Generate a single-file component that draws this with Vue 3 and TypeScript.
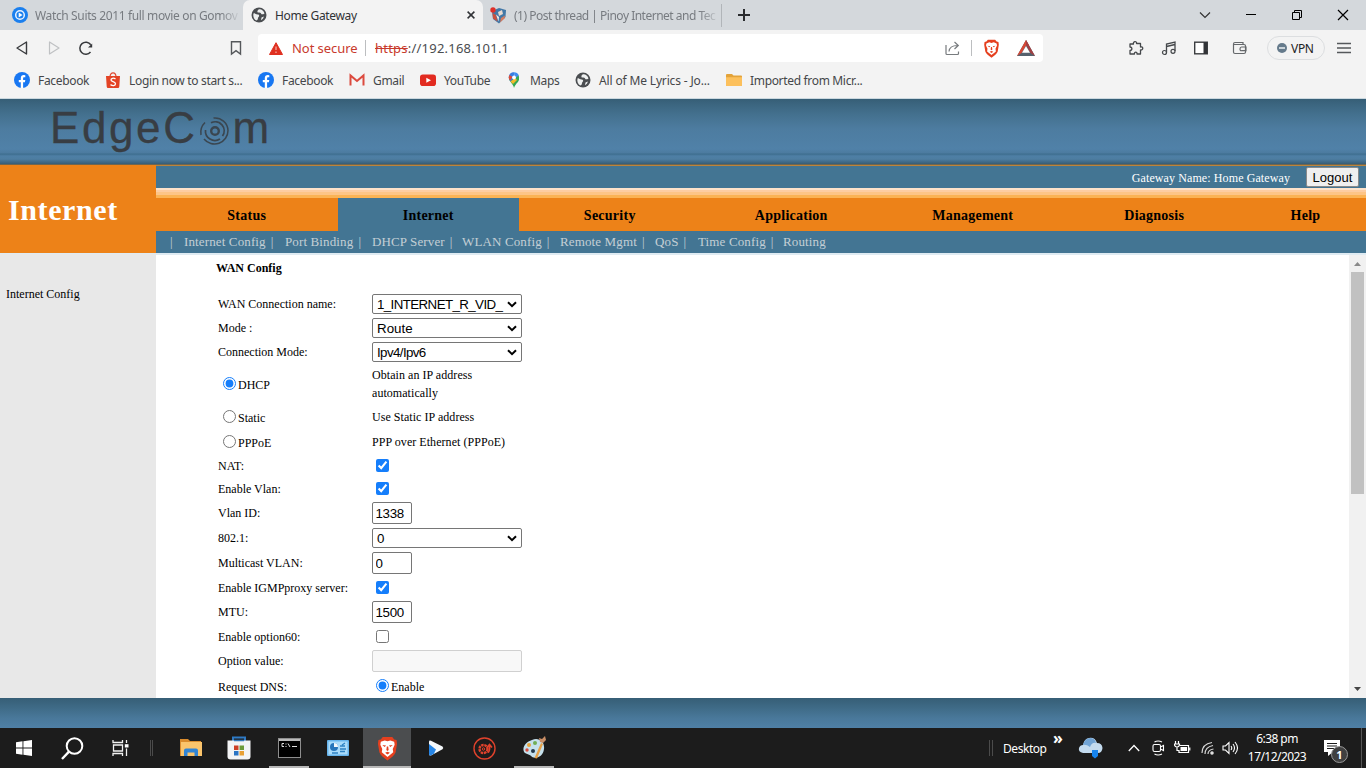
<script setup lang="ts">
import { ref } from 'vue'

interface Row {
  label: string
  h: number
  kind: 'select' | 'radio' | 'check' | 'input' | 'wide' | 'enable'
  value?: string
  on?: boolean
}

const bookmarks = [
  { icon: 'fb', text: 'Facebook', w: 91, tight: true },
  { icon: 'shop', text: 'Login now to start s...', w: 153, tight: true },
  { icon: 'fb', text: 'Facebook', w: 91, tight: true },
  { icon: 'gmail', text: 'Gmail', w: 71, tight: true },
  { icon: 'yt', text: 'YouTube', w: 86, tight: true },
  { icon: 'maps', text: 'Maps', w: 69, tight: true },
  { icon: 'globe', text: 'All of Me Lyrics - Jo...', w: 151, tight: false },
  { icon: 'folder', text: 'Imported from Micr...', w: 150, tight: true },
]

const menu = ['Status', 'Internet', 'Security', 'Application', 'Management', 'Diagnosis', 'Help']
const active = ref('Internet')

const submenu = [
  { text: 'Internet Config', w: 101 },
  { text: 'Port Binding', w: 87 },
  { text: 'DHCP Server', w: 90 },
  { text: 'WLAN Config', w: 98 },
  { text: 'Remote Mgmt', w: 95 },
  { text: 'QoS', w: 43 },
  { text: 'Time Config', w: 85 },
  { text: 'Routing', w: 60 },
]

const rows: Row[] = [
  { label: 'WAN Connection name:', h: 24, kind: 'select', value: '1_INTERNET_R_VID_' },
  { label: 'Mode :', h: 24, kind: 'select', value: 'Route' },
  { label: 'Connection Mode:', h: 24, kind: 'select', value: 'Ipv4/Ipv6' },
  { label: 'DHCP', h: 40, kind: 'radio', value: 'Obtain an IP address automatically', on: true },
  { label: 'Static', h: 26, kind: 'radio', value: 'Use Static IP address' },
  { label: 'PPPoE', h: 24, kind: 'radio', value: 'PPP over Ethernet (PPPoE)' },
  { label: 'NAT:', h: 23, kind: 'check', on: true },
  { label: 'Enable Vlan:', h: 23, kind: 'check', on: true },
  { label: 'Vlan ID:', h: 26, kind: 'input', value: '1338' },
  { label: '802.1:', h: 24, kind: 'select', value: '0' },
  { label: 'Multicast VLAN:', h: 26, kind: 'input', value: '0' },
  { label: 'Enable IGMPproxy server:', h: 23, kind: 'check', on: true },
  { label: 'MTU:', h: 26, kind: 'input', value: '1500' },
  { label: 'Enable option60:', h: 23, kind: 'check', on: false },
  { label: 'Option value:', h: 26, kind: 'wide' },
  { label: 'Request DNS:', h: 25, kind: 'enable', value: 'Enable' },
]
</script>

<template>
  <div class="screen">
    <svg class="defs" width="0" height="0">
      <symbol id="globe" viewBox="0 0 16 16">
        <circle cx="8" cy="8" r="7.500" fill="#4a4d50" />
        <path d="M2.500 6.500C4 5.500 4.500 7.500 6.500 7.500S8.500 9 7.500 10 7.500 12.500 5.500 13.500C3 12.500 1.800 9.500 2.500 6.500Z M7.500 2.500C10 1.800 12.800 3.500 13.500 6.500 12 7.500 10.500 7.800 10 6.500S7 6.500 6.500 5 7 3.500 7.500 2.500Z M10.500 10.500 12.800 9.500C12.500 11.300 11.500 12.500 10 13.200Z" fill="#eef0f0" />
      </symbol>
      <symbol id="fb" viewBox="0 0 16 16">
        <circle cx="8" cy="8" r="8" fill="#1877f2" />
        <path d="M6.800 16V10.300H4.800V8H6.800V6.300C6.800 4.200 8 3.100 9.800 3.100L11.300 3.250V5.200H10.300C9.300 5.200 9.100 5.800 9.100 6.400V8H11.300L10.900 10.300H9.100V16Z" fill="#fff" />
      </symbol>
      <symbol id="shop" viewBox="0 0 16 16">
        <path d="M5 5C5-.5 11-.5 11 5" fill="none" stroke="#df4930" stroke-width="1.200" />
        <path d="M1 4H15L14.300 14.500Q14.200 16 13 16H3Q1.800 16 1.700 14.500Z" fill="#e34325" />
        <path d="M10.500 7C8.500 5.500 6 6.200 6 8S10.600 9.500 10.500 11.800 7.500 14 5.500 12.600" fill="none" stroke="#fff" stroke-width="1.300" />
      </symbol>
      <symbol id="gmail" viewBox="0 0 16 16">
        <path d="M3 13.500V7L8 11 13 7V13.500Z" fill="#f6f4f4" />
        <path d="M1.500 13.500V3.500L8 9 14.500 3.500V13.500" fill="none" stroke="#dc4a3e" stroke-width="2" />
      </symbol>
      <symbol id="yt" viewBox="0 0 16 16">
        <rect y="2.500" width="16" height="11.500" rx="2.800" fill="#e22b20" />
        <path d="M6.300 5.700 11 8.250 6.300 10.800Z" fill="#fff" />
      </symbol>
      <symbol id="maps" viewBox="0 0 16 16">
        <path d="M8 16C7.500 12 2.800 9.500 2.800 5.500L8 6.500 12.500 3Q14.500 8 10.500 11.500 8.500 14 8 16Z" fill="#34a853" />
        <path d="M2.800 5.500C2.800 2 5 .2 8 .2L8 6 4.500 9.500Q3 7.500 2.800 5.500Z" fill="#3a7de0" />
        <path d="M3.500 3 6.500 5 4 8.500Q1.800 6 3.500 3Z" fill="#e04a36" />
        <path d="M4.500 9.500 9 6 11 8 7 12Z" fill="#f4b92b" />
        <path d="M8 .2Q11.500.3 12.800 3.300L8.500 7Z" fill="#3f8df0" />
        <circle cx="8" cy="5.500" r="1.900" fill="#fff" />
      </symbol>
      <symbol id="folder" viewBox="0 0 16 16">
        <path d="M0 3Q0 2 1 2H6L7.500 3.600H15Q16 3.600 16 4.600V13Q16 14 15 14H1Q0 14 0 13Z" fill="#e3a33a" />
        <path d="M0 5.200H16V13Q16 14 15 14H1Q0 14 0 13Z" fill="#fcc05c" />
      </symbol>
      <symbol id="brave" viewBox="0 0 22 26">
        <path d="M6 1H16L18 3.500 20.500 4 21 8 19.500 17Q18 21 11 25.500 4 21 2.500 17L1 8 1.500 4 4 3.500Z" fill="#e5401f" />
        <path d="M4 6 8 4.500 11 5.500 14 4.500 18 6 18.500 9 16.500 13.500 17 17 11 22 5 17 5.500 13.500 3.500 9Z" fill="#fff" />
        <path d="M5.500 9.300 9.500 9.800 8 11.300ZM16.500 9.300 12.500 9.800 14 11.300ZM10.300 11H11.700L12.200 14.500 11 15.500 9.800 14.500ZM8.500 17.500 11 16.500 13.500 17.500 11 19.300Z" fill="#e5401f" />
      </symbol>
    </svg>

    <div class="tabs">
      <div class="tab first">
        <svg width="16" height="16" viewBox="0 0 16 16"><circle cx="8" cy="8" r="8" fill="#1a7fee" /><circle cx="8" cy="8" r="4.300" fill="none" stroke="#e8f2ff" stroke-width="1.500" /><path d="M6.700 5.500 10.500 8 6.700 10.500Z" fill="#fff" /></svg>
        <span class="title t1">Watch Suits 2011 full movie on Gomov</span>
      </div>
      <div class="tab current">
        <svg width="16" height="16"><use href="#globe" /></svg>
        <span class="title">Home Gateway</span>
        <svg width="8" height="8" viewBox="0 0 8 8"><path d="M.6.6 7.400 7.400M7.400.6.6 7.400" stroke="#303236" stroke-width="1.500" /></svg>
      </div>
      <div class="tab third">
        <svg width="17" height="17" viewBox="0 0 17 17"><path d="M2 4 9 1 16 3 15.500 10 9 16.500 3 12Z" fill="#4278a7" /><path d="M8 5 12 3 13 7 9 9Z" fill="#e9d9cf" /><path d="M2.500 6 6 8 7.500 14.500 3 11.500Z" fill="#c9503f" /><path d="M6 7.500 9 10 8.500 14.500Z" fill="#f2ece6" /><path d="M11 11 15 8.500 14.500 11.500 10 15.500Z" fill="#d77a5c" /><circle cx="3" cy="3" r="2.700" fill="#df3029" /></svg>
        <span class="title t3">(1) Post thread | Pinoy Internet and Tec</span>
      </div>
      <svg class="plus" width="12" height="12" viewBox="0 0 12 12"><path d="M6 0V12M0 6H12" stroke="#292b2e" stroke-width="2" /></svg>
      <div class="wincontrols">
        <svg width="12" height="12" viewBox="0 0 12 12"><path d="M1 3.500 6 8.500 11 3.500" fill="none" stroke="#333" stroke-width="1.200" /></svg>
        <svg width="12" height="12" viewBox="0 0 12 12"><path d="M1 5.500H11" stroke="#000" /></svg>
        <svg width="12" height="12" viewBox="0 0 12 12"><path d="M1.500 3.500H8.500V10.500H1.500ZM3.500 3V1.500H10.500V8.500H9" fill="none" stroke="#000" /></svg>
        <svg width="12" height="12" viewBox="0 0 12 12"><path d="M1 1 11 11M11 1 1 11" stroke="#000" stroke-width="1.200" /></svg>
      </div>
    </div>

    <div class="toolbar">
      <div class="navbtns">
        <svg width="14" height="16" viewBox="0 0 14 16"><path d="M11.500 2V14L2 8Z" fill="none" stroke="#393b3e" stroke-width="1.400" stroke-linejoin="round" /></svg>
        <svg width="14" height="16" viewBox="0 0 14 16"><path d="M2.500 2V14L12 8Z" fill="none" stroke="#bfc1c3" stroke-width="1.200" stroke-linejoin="round" /></svg>
        <svg width="16" height="16" viewBox="0 0 16 16"><path d="M12.500 12A6 6 0 1 1 12.800 4.800" fill="none" stroke="#36383b" stroke-width="1.500" /><path d="M14.200 3.500V7.500H10Z" fill="#36383b" /></svg>
      </div>
      <svg class="bm" width="12" height="16" viewBox="0 0 12 16"><path d="M1.500 1.700H10.500V14L6 10.700 1.500 14Z" fill="none" stroke="#55585b" stroke-width="1.400" /></svg>
      <div class="url">
        <svg width="14" height="13" viewBox="0 0 14 13"><path d="M7 .7 13.500 12.500H.5Z" fill="#df3020" stroke="#df3020" stroke-linejoin="round" /><path d="M7 4.500V8M7 9.500V11" stroke="#f4a79d" stroke-width="1.300" /></svg>
        <span class="notsecure">Not secure</span>
        <i class="vline"></i>
        <span class="addr"><s>https</s>://192.168.101.1</span>
        <svg class="share" width="15" height="15" viewBox="0 0 15 15"><path d="M1 4V12.500Q1 13.500 2 13.500H12.500Q13.500 13.500 13.500 12.500V10.500M4 10.500Q4.500 4.500 12.500 4.500M9.500 1 13.300 4.500 9.500 8" fill="none" stroke="#777b7e" stroke-width="1.200" /></svg>
        <i class="vline"></i>
        <svg class="lion" width="17" height="19"><use href="#brave" /></svg>
        <svg width="18" height="16" viewBox="0 0 18 16"><path d="M9 0 18 16H0Z" fill="#55616d" /><path d="M9 0 12 5.300 9 5.500 4.500 13 0 16Z" fill="#d84835" /><path d="M9 0 18 16 13.500 13 9 5Z" fill="#a33f42" /><path d="M9 6 13 12.700H5Z" fill="#fff" /></svg>
      </div>
      <div class="actions">
        <svg width="16" height="16" viewBox="0 0 16 16"><path d="M2 4H5.500C4.500 1 9.500 1 8.500 3.500H12.500V7C15.500 6 15.500 10.500 12.500 10V14H9C9.500 11.500 6 11.500 6.500 14H2V10.500C4.500 10.500 4.500 7 2 7Z" fill="none" stroke="#45484b" stroke-width="1.300" stroke-linejoin="round" /></svg>
        <svg width="16" height="16" viewBox="0 0 16 16"><path d="M5.500 12.500V4L14 2V11M5.500 6.500 14 4.500" fill="none" stroke="#45484b" stroke-width="1.300" /><circle cx="3.500" cy="12.500" r="2" fill="none" stroke="#45484b" stroke-width="1.200" /><circle cx="12" cy="11.300" r="2" fill="none" stroke="#45484b" stroke-width="1.200" /></svg>
        <svg width="14" height="14" viewBox="0 0 14 14"><rect x=".7" y="1.200" width="12.600" height="11.600" fill="#fff" stroke="#3b3d40" stroke-width="1.400" /><path d="M9.500 1H13V13H9.500Z" fill="#323438" /></svg>
        <svg width="15" height="14" viewBox="0 0 15 14"><path d="M1.500 3.500H12Q13.500 3.500 13.500 5V11Q13.500 12.500 12 12.500H3Q1.500 12.500 1.500 11V3Q1.500 1.500 3 1.500H11V3.500M14 6H9.500Q8 6 8 8T9.500 9.700H14Z" fill="none" stroke="#65686b" stroke-width="1.200" /></svg>
        <span class="vpn"><svg width="10" height="10" viewBox="0 0 10 10"><circle cx="5" cy="5" r="5" fill="#657a8b" /><path d="M2 5H8" stroke="#e4e9ec" stroke-width="1.600" /></svg>VPN</span>
        <svg class="burger" width="14" height="12" viewBox="0 0 14 12"><path d="M0 1.500H14M0 6H14M0 10.500H14" stroke="#55585b" stroke-width="1.300" /></svg>
      </div>
    </div>

    <div class="bookmarks">
      <div v-for="(b, i) in bookmarks" :key="i" class="bookmark" :class="{ tight: b.tight }" :style="{ width: b.w + 'px' }">
        <svg width="16" height="16"><use :href="'#' + b.icon" /></svg>
        <span>{{ b.text }}</span>
      </div>
    </div>

    <header class="brand">
      <span>EdgeC</span>
      <svg width="34" height="32" viewBox="0 0 34 32" fill="none" stroke="#3a4650">
        <circle cx="17" cy="16" r="3.800" stroke-width="2.400" />
        <path d="M13 7.800A9 9 0 0 1 24.500 21M22 24A9.500 9.500 0 0 1 7.500 15" stroke-width="1.700" />
        <path d="M15.500 3A13 13 0 0 1 30 15.500 13.500 13.500 0 0 1 6 24M3 20A14 14 0 0 1 7 7.500" stroke-width="1.500" />
      </svg>
      <span>m</span>
    </header>

    <div class="top">
      <div class="section">Internet</div>
      <div class="right">
        <div class="gateway">
          <span>Gateway Name: Home Gateway</span>
          <button>Logout</button>
        </div>
        <div class="stripe"></div>
        <nav class="menu">
          <a v-for="m in menu" :key="m" :class="{ on: m === active }" @click="active = m">{{ m }}</a>
        </nav>
        <div class="submenu">
          <i>|</i>
          <div v-for="(s, i) in submenu" :key="s.text" :style="{ width: s.w + 'px' }">
            <span>{{ s.text }}</span><i v-if="i < submenu.length - 1">|</i>
          </div>
        </div>
      </div>
    </div>

    <main>
      <aside>Internet Config</aside>
      <section>
        <h1>WAN Config</h1>
        <div v-for="r in rows" :key="r.label" class="row" :class="r.kind" :style="{ height: r.h + 'px' }">
          <div class="label">
            <input v-if="r.kind === 'radio'" type="radio" name="wan" :checked="r.on">
            <span>{{ r.label }}</span>
          </div>
          <div class="field">
            <div v-if="r.kind === 'select'" class="dropdown" :class="{ long: r.value!.length > 8 }">
              <span>{{ r.value }}</span>
              <svg width="10" height="7" viewBox="0 0 10 7"><path d="M1 1.200 5 5.200 9 1.200" fill="none" stroke="#000" stroke-width="2" /></svg>
            </div>
            <span v-else-if="r.kind === 'radio'" class="desc">{{ r.value }}</span>
            <input v-else-if="r.kind === 'check'" type="checkbox" :checked="r.on">
            <input v-else-if="r.kind === 'input'" type="text" :value="r.value">
            <input v-else-if="r.kind === 'wide'" class="wide" type="text" disabled>
            <template v-else>
              <input type="radio" name="dns" checked><span>{{ r.value }}</span>
            </template>
          </div>
        </div>
      </section>
      <div class="scroll">
        <svg width="7" height="4" viewBox="0 0 7 4"><path d="M0 4 3.500 0 7 4Z" fill="#8a8a8a" /></svg>
        <div class="thumb"></div>
        <svg class="down" width="7" height="4" viewBox="0 0 7 4"><path d="M0 0 3.500 4 7 0Z" fill="#454545" /></svg>
      </div>
    </main>
    <footer></footer>

    <div class="taskbar">
      <div class="task"><svg width="16" height="16" viewBox="0 0 16 16"><path d="M0 2.200 6.500 1.300V7.600H0ZM7.400 1.200 16 0V7.600H7.400ZM0 8.400H6.500V14.700L0 13.800ZM7.400 8.400H16V16L7.400 14.800Z" fill="#fff" /></svg></div>
      <div class="task"><svg width="23" height="23" viewBox="0 0 23 23"><circle cx="13.500" cy="9" r="7.800" fill="none" stroke="#fff" stroke-width="2" /><path d="M8 14.700 1 22" stroke="#fff" stroke-width="2.400" /></svg></div>
      <div class="task"><svg width="17" height="16" viewBox="0 0 17 16"><path d="M1 0V2.500H10.500V0M1 16V13.500H10.500V16M1.500 5H10.500V11H1.500ZM14.500 0V3M14.500 8.500V16" fill="none" stroke="#f2f2f2" stroke-width="1.300" /><path d="M12.800 4.200H16.500V7.500H12.800Z" fill="#fff" /></svg></div>
      <div class="grip"></div>
      <div class="task exp"><svg width="22" height="18" viewBox="0 0 22 18"><path d="M0 0H8L10 2H21V17H0Z" fill="#da8c2d" /><path d="M1 3H22V17H1Z" fill="#fac46c" /><path d="M4 17V11.500Q4 9.500 6 9.500H16Q18 9.500 18 11.500V17H14.500V13.500H7.500V17Z" fill="#3184d4" /></svg></div>
      <div class="task"><svg width="24" height="24" viewBox="0 0 24 24"><path d="M6 6V1.500H18V6" fill="none" stroke="#2e7ac5" stroke-width="2" /><path d="M.5 4.500H23.500V20.500Q23.500 23.500 20.500 23.500H3.500Q.5 23.500.5 20.500Z" fill="#f3f4f5" /><path d="M7 4.500H17" stroke="#3479b8" stroke-width="1.500" /><path d="M7 9.500H11.500V14H7Z" fill="#cc3f24" /><path d="M12.500 9.500H17V14H12.500Z" fill="#6c9b39" /><path d="M7 15H11.500V19.500H7Z" fill="#2b75c4" /><path d="M12.500 15H17V19.500H12.500Z" fill="#e8a034" /></svg></div>
      <div class="task open"><svg width="23" height="20" viewBox="0 0 23 20"><rect x=".5" y=".5" width="22" height="19" fill="#000" stroke="#8e8e8e" /><path d="M1 1H22V3H1Z" fill="#bbb" /><path d="M6 5.500H4V8.500H6M8 5.500V6.500M8 8V9M10 5.500 12 9M14 8.500H19" fill="none" stroke="#ddd" /></svg></div>
      <div class="task"><svg width="22" height="16" viewBox="0 0 22 16"><rect width="22" height="16" rx="1" fill="#66b4ec" /><rect x="1.500" y="1.500" width="19" height="13" fill="#a9dbfb" /><circle cx="7" cy="7" r="4" fill="#2775bb" /><path d="M7 7V3A4 4 0 0 1 11 7Z" fill="#f3f7fa" /><path d="M13 6H18M13 9H19M13 11.500H18M5 13H11M15 5 18 3" stroke="#2e83c4" stroke-width="1.300" /></svg></div>
      <div class="task lit open"><svg width="21" height="25"><use href="#brave" /></svg></div>
      <div class="task"><svg width="16" height="16" viewBox="0 0 16 16"><path d="M1 2Q1 0 3 .800L14.500 6.500Q16 8 14.500 9.200L3 15.500Q1 16 1 14Z" fill="#f4f8fb" /><path d="M1 4 8 9.500 6 13.500 3 15.500Q1 16 1 14Z" fill="#2685e6" /></svg></div>
      <div class="task"><svg width="23" height="23" viewBox="0 0 23 23" fill="none" stroke="#df422c"><circle cx="11.500" cy="11.500" r="10.500" stroke-width="1.400" /><circle cx="10.500" cy="12" r="4" stroke-width="2.400" stroke-dasharray="2.500 .7" /><circle cx="10.500" cy="12" r="1.200" /><path d="M14.500 15.500Q17 15 16.500 9M14 10.500 16.500 7.500 19 10.500" stroke-width="1.700" /></svg></div>
      <div class="task open paint"><svg width="25" height="24" viewBox="0 0 25 24"><path d="M10 4C17 1 23 6 22 13 21 21 14 23 10 21 8 18 6 19 3 17-1 13 3 6 10 4Z" fill="#c6e0ec" /><circle cx="7" cy="9" r="2" fill="#e6a33d" /><circle cx="13" cy="7" r="2" fill="#71ae54" /><circle cx="5" cy="14" r="1.700" fill="#d64b3e" /><circle cx="11" cy="15" r="2" fill="#23384b" /><path d="M12.500 22 19 7 21 8 15 22.500Z" fill="#e6a148" /><path d="M18 6 17 2 20 3 23 0 24 4 21 7Z" fill="#c98e66" /></svg></div>

      <div class="tray">
        <div class="grip2"></div>
        <span class="desktop">Desktop</span>
        <span class="more">»</span>
        <svg class="weather" width="25" height="22" viewBox="0 0 25 22"><path d="M5 16Q0 15 1 11 2 8 5 8 6 2 11 1 17 0 19 6 24 6 24.500 11 24 16 20 16Z" fill="#c3dbef" /><path d="M5 8Q7 1 12 1 17 1 18 6 14 5 12 10 8 7 5 8Z" fill="#71a4d5" /><path d="M14 13H20V19L17 21.500 14 19Z" fill="#1684ee" /></svg>
        <svg class="chev" width="12" height="8" viewBox="0 0 12 8"><path d="M.8 7 6 1.500 11.200 7" fill="none" stroke="#fff" stroke-width="1.300" /></svg>
        <svg class="cam" width="13" height="16" viewBox="0 0 13 16" fill="none" stroke="#fff" stroke-width="1.100"><path d="M2.500 2Q6 0 10 2M2.500 14Q6 16 10 14" /><rect x="1" y="4.500" width="7.500" height="7" rx="1.500" /><path d="M8.500 7 11.500 5.500V10.500L8.500 9" /></svg>
        <svg class="bat" width="17" height="14" viewBox="0 0 17 14" fill="none" stroke="#fff" stroke-width="1.200"><path d="M6 4.500H14.500V11.500H5V9M15.800 6.500V9.500M1.500 0V2.500M4.500 0V2.500M.5 3H5.500V4Q5 6 3 6T.5 4ZM3 6V9.500H5" /><path d="M6.500 6H13V10H6.500Z" fill="#fff" stroke="none" /></svg>
        <svg class="wifi" width="14" height="14" viewBox="0 0 14 14" fill="none" stroke="#d6d6d6" stroke-width="1.200"><path d="M1 12Q1 3 11 1.500M4 13Q4 6 12 4.500M7 13Q7 9 12.500 8" /><circle cx="11" cy="12" r="1.200" fill="#fff" /></svg>
        <svg class="vol" width="17" height="14" viewBox="0 0 17 14" fill="none" stroke="#fff" stroke-width="1.100"><path d="M1 5H3.500L7 1.500V12.500L3.500 9H1ZM9 5Q10.500 7 9 9M11 3Q14 7 11 11M13 1Q18 7 13 13" /></svg>
        <div class="clock"><span>6:38 pm</span><span>17/12/2023</span></div>
        <div class="notice">
          <svg width="17" height="16" viewBox="0 0 17 16"><path d="M0 0H16V12H9L4 16V12H0Z" fill="#fff" /><path d="M3 3.500H13M3 6H13M3 8.500H10" stroke="#1c1c1c" stroke-width="1.200" /></svg>
          <b>1</b>
        </div>
        <div class="peek"></div>
      </div>
    </div>
  </div>
</template>

<style>
body {
  margin: 0;
  overflow: hidden;
}
</style>

<style scoped>
.screen {
  width: 1366px;
  height: 768px;
  overflow: hidden;
  display: flex;
  flex-direction: column;
  background: #fff;
  font-family: 'Liberation Serif', serif;
  font-size: 12px;
  color: #000;
}
.screen > * { flex-shrink: 0; }
.defs { position: absolute; }
svg { display: block; flex-shrink: 0; }
i { font-style: normal; }

.tabs, .toolbar, .bookmarks {
  display: flex;
  align-items: center;
  font-family: 'Noto Sans', sans-serif;
  background: #f3f3f3;
  white-space: nowrap;
}
.tabs { height: 30px; background: #d4d8dc; }
.tab {
  height: 30px;
  box-sizing: border-box;
  display: flex;
  align-items: center;
  color: #777b80;
}
.tab.first { width: 243px; padding-left: 12px; }
.first .title { margin-left: 7px; width: 206px; }
.current { width: 240px; padding-left: 8px; background: #f3f3f3; border-radius: 7px 7px 0 0; color: #303236; }
.current .title { margin-left: 8px; width: 192px; letter-spacing: -.35px; }
.third { width: 239px; height: 23px; padding-left: 7px; border-right: 1px solid #b1b5b9; }
.third .title { margin-left: 7px; width: 206px; }
.title { overflow: hidden; font-size: 12px; }
.t1, .t3 { mask-image: linear-gradient(90deg, #000 90%, transparent); }
.t1 { letter-spacing: -.36px; }
.t3 { letter-spacing: -.5px; }
.plus { margin-left: 16px; }
.wincontrols { margin-left: auto; margin-right: 17px; display: flex; gap: 34px; }

.toolbar { height: 36px; }
.navbtns { width: 230px; display: flex; padding-left: 15px; box-sizing: border-box; gap: 18px; }
.navbtns svg:last-child { margin-left: -1px; }
.url {
  width: 785px;
  height: 28px;
  margin-left: 16px;
  padding-left: 11px;
  box-sizing: border-box;
  display: flex;
  align-items: center;
  background: #fff;
  border-radius: 4px;
  font-size: 13px;
}
.notsecure { width: 73px; margin-left: 9px; color: #c83a2d; letter-spacing: -.05px; }
.vline { width: 1px; height: 16px; background: #bcbec0; }
.addr { width: 570px; margin-left: 9px; color: #4b4d50; letter-spacing: .22px; }
.addr s { color: #c83a2d; }
.share + .vline { margin-left: 11px; }
.lion { margin: 0 17px 0 11px; }
.actions { display: flex; align-items: center; margin-left: 85px; }
.actions > svg { margin-right: 17px; }
.actions > svg:nth-child(3) { margin-right: 24px; }
.actions > svg:nth-child(4) { margin-right: 20px; }
.vpn {
  width: 58px;
  height: 24px;
  box-sizing: border-box;
  border: 1px solid #dcdee0;
  border-radius: 12px;
  display: flex;
  align-items: center;
  padding-left: 9px;
  gap: 4px;
  color: #222;
  letter-spacing: -.3px;
}
.actions > .burger { margin: 0 0 0 12px; }

.bookmarks { height: 33px; padding: 0 0 4px 14px; box-sizing: border-box; border-bottom: 1px solid #cbd8df; color: #45474a; }
.bookmark { display: flex; align-items: center; gap: 8px; letter-spacing: -.15px; }
.bookmark.tight { letter-spacing: -.33px; }

.brand {
  height: 66px;
  box-sizing: border-box;
  padding: 4px 0 0 50px;
  display: flex;
  align-items: flex-start;
  border-bottom: 1px solid #6e6651;
  background: linear-gradient(#365e76 0, #3b657f 5px, #44718f 16px, #4d7ca0 30px, #5081a8 50px, #4c7b9f 54px, #3d6d8e 55px, #4e7fa5 57px, #4d7da1 60px, #375d76 65px);
  color: #383d43;
  font: 44px/50px 'Liberation Sans', sans-serif;
  letter-spacing: 2.600px;
  -webkit-text-stroke: .3px #383d43;
}
.brand svg { margin: 12px 1px 0 0; }

.top { height: 88px; display: flex; border-top: 1px solid #bd843a; box-sizing: border-box; }
.section {
  width: 156px;
  flex-shrink: 0;
  margin-top: -1px;
  padding: 28px 0 0 8px;
  box-sizing: border-box;
  background: #ed8218;
  color: #fff;
  font-size: 30px;
  line-height: 34px;
  font-weight: bold;
  letter-spacing: .6px;
}
.right { width: 1210px; background: #437593; }
.gateway { height: 22px; display: flex; justify-content: flex-end; align-items: center; padding-right: 7px; color: #fff; font-size: 12px; letter-spacing: .1px; }
.gateway span { margin-top: 2px; }
.gateway button {
  width: 53px;
  height: 20px;
  margin-left: 16px;
  padding: 0;
  background: #efefef;
  border: 1px solid #8a8a8a;
  border-radius: 2px;
  color: #000;
  font: 13px 'Liberation Sans', sans-serif;
}
.stripe { height: 10px; background: linear-gradient(#fde2ca 0 2px, #fdcda2 2px 4px, #fdc587 4px 7px, #fbb354 7px); }
.menu { height: 33px; display: flex; }
.menu a {
  width: 181.500px;
  height: 33px;
  line-height: 35px;
  text-align: center;
  background: #ed8218;
  font-size: 14px;
  font-weight: bold;
  letter-spacing: .25px;
}
.menu a:last-child { flex: 1; }
.menu a.on { background: #437593; }
.submenu { display: flex; height: 22px; line-height: 22px; padding-left: 14px; color: #c3cfd5; font-size: 13px; letter-spacing: .13px; white-space: nowrap; }
.submenu > i { width: 14px; }
.submenu div { display: flex; gap: 5px; }

main { height: 445px; display: flex; border-top: 2px solid #dfebf2; box-sizing: border-box; }
aside { width: 156px; box-sizing: border-box; margin-top: -1px; padding: 33px 0 0 6px; background: #e8e8e8; }
section { width: 1193px; height: 443px; overflow: hidden; padding-left: 60px; box-sizing: border-box; }
h1 { margin: 0; height: 37px; line-height: 26px; font-size: 12px; }
.row { display: flex; align-items: center; padding-left: 2px; }
.label { width: 154px; display: flex; align-items: center; white-space: nowrap; }
.check .label, .enable .label, .radio .label { padding-top: 1px; }
.field { width: 150px; display: flex; align-items: center; }
.enable .field span { margin-top: 2px; }
.desc { width: 137px; line-height: 18px; letter-spacing: .05px; }
input { margin: 0; box-sizing: border-box; flex-shrink: 0; accent-color: #157efb; }
input[type='radio'], input[type='checkbox'] { width: 13px; height: 13px; }
.label input { margin: -3px 2px 0 5px; }
.radio .label span { margin-top: 1px; }
.check .field input { margin-left: 4px; }
.enable .field input { margin: -3px 2px 0 4px; }
input[type='text'] {
  width: 40px;
  height: 22px;
  padding: 0 0 0 2.500px;
  border: 1px solid #767676;
  border-radius: 2px;
  font: 13.333px 'Liberation Sans', sans-serif;
  letter-spacing: -.3px;
}
input[type='text'].wide { width: 150px; background: #f8f8f8; border-color: #d0d0d0; }
.dropdown {
  width: 150px;
  height: 20px;
  box-sizing: border-box;
  border: 1px solid #767676;
  border-radius: 2px;
  padding: 0 4px;
  display: flex;
  align-items: center;
  justify-content: space-between;
  font: 13.333px 'Liberation Sans', sans-serif;
}
.dropdown.long { letter-spacing: -.6px; }

.scroll { width: 17px; background: #f1f1f1; display: flex; flex-direction: column; align-items: center; padding-top: 7px; box-sizing: border-box; }
.thumb { width: 13px; height: 222px; margin-top: 6px; background: #c1c1c1; }
.down { margin: auto 0 7px; }
footer { height: 30px; background: linear-gradient(#365e76, #3f6b87 10px, #49789a 20px, #4f80a6); }

.taskbar { height: 40px; display: flex; background: #1c1c1c; color: #fff; font-family: 'Noto Sans', sans-serif; }
.task { width: 48px; height: 40px; box-sizing: border-box; display: flex; align-items: center; justify-content: center; border-bottom: 2px solid transparent; padding-top: 2px; }
.task:nth-child(n + 6):nth-child(-n + 12) { width: 49px; }
.task.open { border-bottom-color: #b8b8b8; }
.task.open:nth-child(7) { width: 40px; margin: 0 4px 0 6px; }
.task.lit:nth-child(9) { width: 48px; margin-left: 1px; background: #4b4d4f; }
.task.paint:nth-child(12) { width: 40px; margin-left: 5px; }
.grip { width: 3px; height: 16px; margin: 12px 13px 0 6px; border: solid #4b4b4b; border-width: 0 1px; box-sizing: border-box; }
.task.exp { width: 46px; margin-left: 2px; }
.tray { margin-left: auto; width: 377px; display: flex; align-items: center; }
.grip2 { width: 4px; height: 16px; box-sizing: border-box; border: solid #4b4b4b; border-width: 0 1px; }
.desktop { width: 50px; margin-left: 10px; letter-spacing: -.45px; }
.more { width: 11px; margin-top: -21px; font-size: 16px; font-weight: bold; line-height: 16px; }
.weather { margin-left: 14px; }
.chev { margin-left: 25px; }
.cam { margin-left: 12px; }
.bat { margin-left: 9px; }
.wifi { margin-left: 10px; }
.vol { margin-left: 7px; }
.clock { width: 62px; margin-left: 7px; display: flex; flex-direction: column; align-items: center; line-height: 18px; font-size: 12px; letter-spacing: -.55px; white-space: nowrap; }
.notice { position: relative; margin-left: 16px; width: 30px; }
.notice b {
  position: absolute;
  left: 7px;
  top: 6px;
  width: 15px;
  height: 15px;
  border: 1px solid #989898;
  border-radius: 50%;
  background: #404040;
  text-align: center;
  font-size: 11px;
  line-height: 15px;
}
.peek { width: 1px; height: 40px; margin-left: auto; margin-right: 4px; background: #555; }
</style>
